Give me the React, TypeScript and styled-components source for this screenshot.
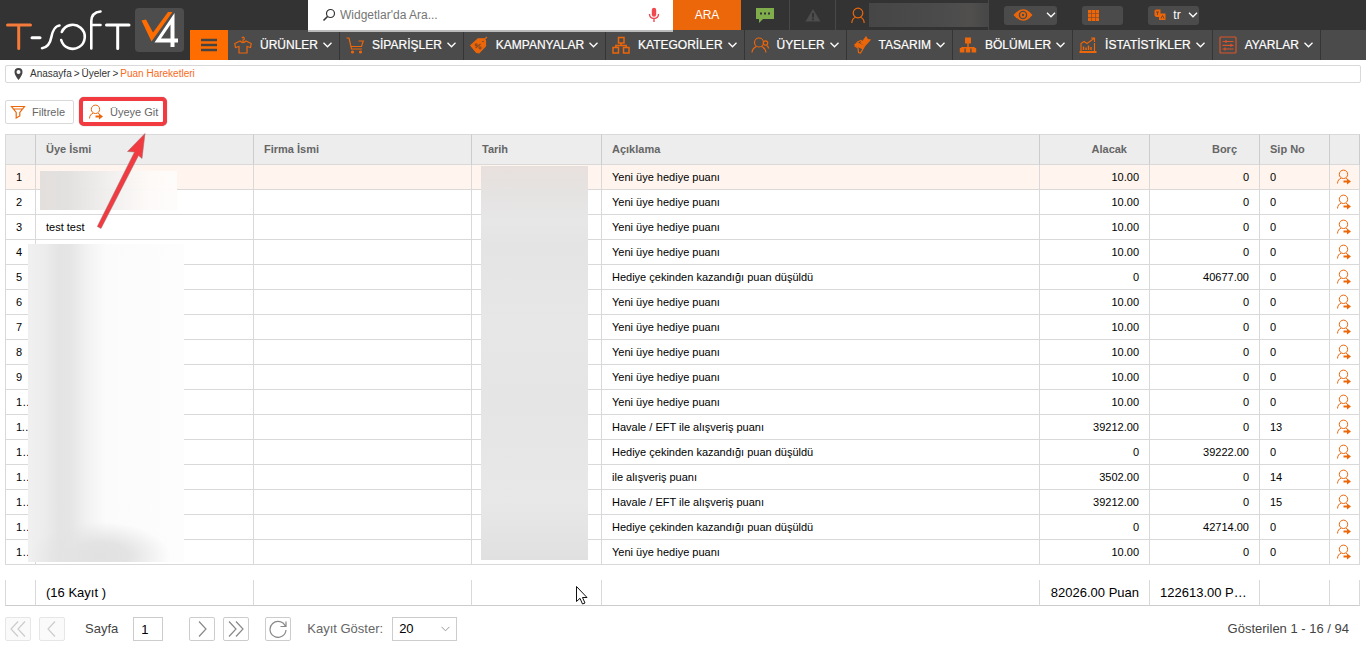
import React from "react";
import styled, { createGlobalStyle, css } from "styled-components";

const ORANGE = "#ec660a";
const LINE = "#d9d9d9";

const GlobalStyle = createGlobalStyle`
  *, *::before, *::after { box-sizing: border-box; }
  body {
    margin: 0;
    background: #fff;
    color: #000;
    font: 11px/14px "Liberation Sans", Arial, sans-serif;
  }
  button, input, select { font: inherit; color: inherit; }
`;

/* ---------- header ---------- */

const Header = styled.header`
  display: flex;
  background: #333;
`;
const LogoLink = styled.a`
  flex: 0 0 190px;
  height: 60px;
`;
const HeaderMain = styled.div`
  flex: 1;
  min-width: 0;
`;
const TopBar = styled.div`
  display: flex;
  align-items: center;
  height: 30px;
  padding-left: 118px;
`;
const Search = styled.form`
  position: relative;
  display: flex;
  flex: 0 0 433px;
  height: 30px;
`;
const SearchField = styled.label`
  display: flex;
  flex: 1;
  align-items: center;
  padding: 0 13px 0 14px;
  background: #fff;
  box-shadow: 0 2px #bbb;
`;
const SearchInput = styled.input`
  flex: 1;
  min-width: 0;
  margin-left: 4px;
  padding: 0;
  border: 0;
  outline: 0;
  background: none;
  font-size: 12px;
  &::placeholder { color: #757575; opacity: 1; }
`;
const SearchButton = styled.button`
  width: 68px;
  padding: 0;
  border: 0;
  background: ${ORANGE};
  color: #fff;
  font-size: 12px;
`;
const TopCell = styled.button<{ $width: number; $end?: boolean }>`
  display: flex;
  align-items: center;
  justify-content: ${(p) => (p.$end ? "flex-end" : "center")};
  width: ${(p) => p.$width}px;
  height: 30px;
  padding: 0;
  border: 0;
  border-right: 1px solid #484848;
  background: none;
`;
const UserName = styled.span`
  width: 119px;
  height: 24px;
  margin-left: 3px;
  background: linear-gradient(90deg, #464646, #4b4b4b 60%, #504f4e 85%, #474747);
`;
const Pill = styled.button<{ $width: number; $gap: number }>`
  display: flex;
  align-items: center;
  justify-content: space-between;
  width: ${(p) => p.$width}px;
  height: 19px;
  margin-left: ${(p) => p.$gap}px;
  padding: 0 1px 0 6px;
  border: 0;
  border-radius: 3px;
  background: #4b4b4b;
  color: #fff;
  font-size: 12px;
`;
const Nav = styled.nav`
  display: flex;
  height: 30px;
  background: #4b4b4b;
`;
const Burger = styled.button`
  display: flex;
  align-items: center;
  justify-content: center;
  width: 38px;
  padding: 0;
  border: 0;
  background: #ff6c00;
`;
const NavLink = styled.a`
  display: flex;
  align-items: center;
  gap: 5px;
  padding: 0 7px 0 6px;
  border-right: 1px solid #353535;
  color: #fff;
  font-size: 12px;
  text-decoration: none;
  white-space: nowrap;
  -webkit-text-stroke: 0.2px #fff;
  svg:first-child { margin-right: 3px; }
`;

/* ---------- page ---------- */

const Page = styled.main`
  padding: 5px 5px 0;
`;
const Breadcrumb = styled.nav`
  display: flex;
  align-items: center;
  gap: 2px;
  height: 18px;
  padding-left: 8px;
  border: 1px solid ${LINE};
  border-radius: 2px;
  font-size: 10px;
  color: #333;
  svg { margin-right: 5px; }
`;
const Crumb = styled.a<{ $current?: boolean }>`
  color: ${(p) => (p.$current ? "#f96a1b" : "#333")};
  text-decoration: none;
`;
const Toolbar = styled.div`
  display: flex;
  align-items: center;
  gap: 5px;
  margin: 14px 0 8px;
`;
const ToolButton = styled.button<{ $marked?: boolean }>`
  display: flex;
  align-items: center;
  gap: 6px;
  height: 24px;
  padding: 0 8px 0 4px;
  border: 1px solid ${LINE};
  border-radius: 2px;
  background: #fff;
  color: #666;
  ${(p) =>
    p.$marked &&
    css`
      height: 29px;
      padding: 0 5px;
      border: 4px solid #f23b40;
      border-radius: 5px;
      box-shadow: 0 0 1px #777;
    `}
`;
const Grid = styled.div`
  position: relative;
  margin-right: 1px;
`;
const Table = styled.table`
  width: 100%;
  table-layout: fixed;
  border-collapse: separate;
  border-spacing: 0;
`;
const cell = css<{ $right?: boolean }>`
  overflow: hidden;
  padding: 0 10px;
  border: solid ${LINE};
  border-width: 0 1px 1px 0;
  text-align: ${(p) => (p.$right ? "right" : "left")};
  text-overflow: ellipsis;
  white-space: nowrap;
  &:first-child { border-left-width: 1px; }
`;
const Th = styled.th<{ $right?: boolean }>`
  ${cell}
  height: 31px;
  padding-right: ${(p) => (p.$right ? 22 : 10)}px;
  padding-bottom: 2px;
  border-top-width: 1px;
  border-right-color: #ccc;
  background: #ededed;
  color: #666;
`;
const Td = styled.td<{ $right?: boolean }>`
  ${cell}
  height: 25px;
`;
const Tr = styled.tr<{ $active?: boolean }>`
  background: ${(p) => (p.$active ? "#fff5ee" : "#fff")};
`;
const IconTd = styled(Td)`
  padding: 0 0 0 6px;
`;
const RowLink = styled.a`
  display: flex;
`;
const Summary = styled(Table)`
  margin-top: 15px;
  font-size: 13px;
`;
const SummaryTd = styled(Td)`
  height: 26px;
  border-bottom-color: #ccc;
`;

const Mask = styled.div<{ $box: [number, number, number, number]; $fill: string }>`
  position: absolute;
  left: ${(p) => p.$box[0]}px;
  top: ${(p) => p.$box[1]}px;
  width: ${(p) => p.$box[2]}px;
  height: ${(p) => p.$box[3]}px;
  background: ${(p) => p.$fill};
`;
const ArrowMark = styled.svg`
  position: absolute;
  left: 85px;
  top: -8px;
  pointer-events: none;
`;
const Pointer = styled.svg`
  position: absolute;
  left: 570px;
  bottom: 0;
  pointer-events: none;
`;

const Pager = styled.footer`
  display: flex;
  align-items: center;
  padding: 11px 12px 0 0;
  color: #444;
  font-size: 13px;
`;
const PagerButton = styled.button`
  display: flex;
  align-items: center;
  justify-content: center;
  width: 26px;
  height: 24px;
  margin-right: 8px;
  padding: 0;
  border: 1px solid #ccc;
  border-radius: 2px;
  background: #fff;
  color: #888;
  &:disabled { border-color: #e6e6e6; background: #fafafa; color: #ccc; }
`;
const PageField = styled.label`
  display: flex;
  align-items: center;
  gap: 15px;
  margin: 0 26px 0 12px;
`;
const PageInput = styled.input`
  width: 30px;
  height: 24px;
  padding: 0 7px;
  border: 1px solid #ccc;
  color: #000;
`;
const Refresh = styled(PagerButton)`
  margin: 0 16px 0 8px;
`;
const SizeField = styled.label`
  position: relative;
  display: flex;
  align-items: center;
  gap: 9px;
  color: #666;
  svg { position: absolute; right: 7px; }
`;
const SizeSelect = styled.select`
  width: 65px;
  height: 24px;
  padding: 0 6px;
  border: 1px solid #ccc;
  border-radius: 0;
  background: #fff;
  color: #000;
  appearance: none;
`;
const Shown = styled.span`
  margin-left: auto;
`;

/* ---------- drawings ---------- */

type IconProps = { w?: number; h?: number; box?: string; stroke?: string; sw?: number; children: React.ReactNode };
const Icon = ({ w = 18, h = 18, box, stroke = ORANGE, sw = 1.2, children }: IconProps) => (
  <svg width={w} height={h} viewBox={box ?? `0 0 ${w} ${h}`} fill="none" stroke={stroke} strokeWidth={sw} aria-hidden="true">
    {children}
  </svg>
);

const Chevron = ({ stroke = "#fff", w = 9, sw = 1.3 }: { stroke?: string; w?: number; sw?: number }) => (
  <Icon w={w} h={6} box="0 0 9 6" stroke={stroke} sw={sw}><path d="M.5.8 4.5 4.8 8.5.8" /></Icon>
);

const Logo = () => (
  <svg width="190" height="60" viewBox="0 0 190 60" fill="none" strokeLinecap="round" strokeWidth="3" role="img" aria-label="T-Soft V4">
    <path d="M7.5 25H30.5M18.7 25V48.5" stroke="#f47b3a" />
    <g stroke="#fff">
      <path d="M32 37.7H40" />
      <path d="M42 48.2C48 47.5 50.5 42 51.5 36.5S55.5 26 59.5 25.5" strokeWidth="2.6" />
      <path d="M61.8 32A12 12 0 1 1 61.2 40" strokeWidth="2.6" />
      <path d="M91.3 48.500V21Q91.5 12.5 100.5 11.5M91.3 25H100.5" strokeWidth="2.6" />
      <path d="M106.5 25H129M117.7 25V48.5" />
    </g>
    <rect x="135" y="8" width="49" height="44" rx="4" fill="#4d4d4d" />
    <path d="M141.5 20.5 146 19.5 153 32.5 168 12H172.5L151.5 41.5Z" fill="#ff6c00" />
    <path d="M174.5 13V38.5H178V42.5H174.5V47H170.5V42.5H154.5ZM170.5 24.5 161 38.5H170.5Z" fill="#fff" fillRule="evenodd" />
  </svg>
);

const MemberGo = () => (
  <Icon w={16} h={16} sw={1}>
    <circle cx="7.5" cy="5.300" r="4.200" />
    <path d="M1.5 14.5C1.7 11.5 3 10 5 9.200M10 9.200 11 10" />
    <path d="M7.500 12.500H11.500" strokeWidth="2" />
    <path d="M11 9.500 15 12.500 11 15.500Z" fill={ORANGE} stroke="none" />
  </Icon>
);

const Bars = () => <Icon w={16} h={14} stroke="#444" sw={2.4}><path d="M0 2H16M0 7H16M0 12H16" /></Icon>;

const ShirtIcon = () => (
  <Icon>
    <path d="M9 5.500V4Q10.8 3.500 10 1.800T7.800 2.200M6 5 .8 7.500 1.500 11.500 5 10.500V17H13V10.500L16.500 11.500 17.200 7.500 12 5Q9 8 6 5Z" />
  </Icon>
);
const CartIcon = () => (
  <Icon>
    <path d="M.5 2H3L5.500 13H16M4 6M12.500 5H17.300L15.500 10.500H5.200" />
    <circle cx="6.500" cy="16" r="1" fill={ORANGE} />
    <circle cx="14.500" cy="16" r="1" fill={ORANGE} />
  </Icon>
);
const TagIcon = () => (
  <Icon>
    <path d="M.8 9.500 8 2.800H14L15.500 4.500V10L9 16.800 6.500 16.500Z" fill={ORANGE} />
    <path d="M12 5.500 17 1" />
    <circle cx="13" cy="5.500" r="1.300" fill="#4b4b4b" />
    <path d="M5.500 12 10.500 8" stroke="#8a4a22" />
    <circle cx="6.200" cy="8.800" r="1" stroke="#8a4a22" />
    <circle cx="10" cy="11.800" r="1" stroke="#8a4a22" />
  </Icon>
);
const TreeIcon = () => (
  <Icon sw={1.5}>
    <path d="M6.500 1.500H12V7H6.500ZM1 11.500H6.500V17H1ZM11.500 11.500H17V17H11.500ZM9 7V9.500M3.800 11.500V9.500H14.200V11.500" />
  </Icon>
);
const UsersIcon = () => (
  <Icon>
    <circle cx="8" cy="6.500" r="4.500" />
    <path d="M1 16.500C1.300 13 3 11.500 5.500 10.500M10.500 10.500C13 11.500 14.500 13 15 16.500" />
    <circle cx="14.500" cy="7" r="2.200" />
    <path d="M15.500 9.500Q17.500 10.500 17.500 12.500" />
  </Icon>
);
const BrushIcon = () => (
  <Icon>
    <path d="M10 5 13 1 14.500 3.500 17 4 12.500 9 11 9.500 8 6.500Z" fill={ORANGE} />
    <path d="M4.500 6 8 4.500 12 9 10.500 12 7.500 17 5.500 16.500 5 12 2 10Z" />
    <path d="M2 8.500 5 7 11 10.500 9.500 12.500 3.500 10Z" fill={ORANGE} />
  </Icon>
);
const OrgIcon = () => (
  <Icon sw={1.5}>
    <path d="M6 1.500H12V7.500H6ZM.8 12H5.400V16.500H.8ZM6.700 12H11.300V16.500H6.700ZM12.600 12H17.200V16.500H12.600Z" fill={ORANGE} stroke="none" />
    <path d="M9 7V13M3 13V11.800H15V13" />
  </Icon>
);
const StatsIcon = () => (
  <Icon>
    <path d="M2 15.500V7.500L5 5.500 8 7.500 15 2.500M12 2H15.500V6M15.500 7V15.500" />
    <path d="M4.500 14V10.500M7 14V11.500M9.500 14V9.500M12 14V11" strokeWidth="1.500" />
    <path d="M.5 15H17.500V17H.5Z" fill={ORANGE} stroke="none" />
  </Icon>
);
const SettingsIcon = () => (
  <Icon stroke="#d9542b">
    <rect x="1" y="1" width="16" height="16" rx="1" />
    <path d="M3.500 5.500H14.500M3.500 9.300H14.500M3.500 13H14.500M7 4V7M12 7.800V10.800M6 11.500V14.500" />
  </Icon>
);

/* ---------- data ---------- */

const NAV: [string, () => React.JSX.Element][] = [
  ["ÜRÜNLER", ShirtIcon],
  ["SİPARİŞLER", CartIcon],
  ["KAMPANYALAR", TagIcon],
  ["KATEGORİLER", TreeIcon],
  ["ÜYELER", UsersIcon],
  ["TASARIM", BrushIcon],
  ["BÖLÜMLER", OrgIcon],
  ["İSTATİSTİKLER", StatsIcon],
  ["AYARLAR", SettingsIcon],
];

type Row = { name?: string; text: string; credit: string; debit: string; order: string };
const gift: Row = { text: "Yeni üye hediye puanı", credit: "10.00", debit: "0", order: "0" };
const spent = (debit: string): Row => ({ text: "Hediye çekinden kazandığı puan düşüldü", credit: "0", debit, order: "0" });
const earned = (text: string, credit: string, order: string): Row => ({ text, credit, debit: "0", order });

const ROWS: Row[] = [
  gift,
  gift,
  { ...gift, name: "test test" },
  gift,
  spent("40677.00"),
  gift,
  gift,
  gift,
  gift,
  gift,
  earned("Havale / EFT ile alışveriş puanı", "39212.00", "13"),
  spent("39222.00"),
  earned("ile alışveriş puanı", "3502.00", "14"),
  earned("Havale / EFT ile alışveriş puanı", "39212.00", "15"),
  spent("42714.00"),
  gift,
];

const WIDTHS = ["31px", "218px", "218px", "130px", "auto", "110px", "110px", "70px", "30px"];
const Columns = () => (
  <colgroup>{WIDTHS.map((width, i) => <col key={i} style={{ width }} />)}</colgroup>
);

export default function App() {
  return (
    <>
      <GlobalStyle />
      <Header>
        <LogoLink href="#"><Logo /></LogoLink>
        <HeaderMain>
          <TopBar>
            <Search onSubmit={(e) => e.preventDefault()}>
              <SearchField>
                <Icon w={14} h={14} stroke="#333">
                  <circle cx="8.500" cy="5.500" r="4" />
                  <path d="M5.500 8.500 1.500 12.500" strokeWidth="1.600" />
                </Icon>
                <SearchInput placeholder="Widgetlar'da Ara..." aria-label="Ara" />
                <Icon w={12} h={16} stroke="#f04a4f" sw={1.4}>
                  <rect x="3.800" y=".8" width="4.400" height="9" rx="2.200" fill="#f04a4f" stroke="none" />
                  <path d="M1.500 7Q1.500 11.500 6 11.500T10.500 7M6 11.500V15" />
                </Icon>
              </SearchField>
              <SearchButton type="submit">ARA</SearchButton>
            </Search>
            <TopCell $width={49} aria-label="Mesajlar">
              <Icon w={18} h={16} stroke="none">
                <path d="M0 1H18V12H7L3 16V12H0Z" fill="#7fad4c" />
                <path d="M4 5.500H6V7.500H4ZM8 5.500H10V7.500H8ZM12 5.500H14V7.500H12Z" fill="#333" />
              </Icon>
            </TopCell>
            <TopCell $width={46} aria-label="Uyarılar">
              <Icon w={16} h={14} stroke="none">
                <path d="M8 1 15.500 13.500H.5Z" fill="#4d4d4d" />
                <path d="M7 5H9V9.500H7ZM7 10.500H9V12.300H7Z" fill="#333" />
              </Icon>
            </TopCell>
            <TopCell $width={153} $end aria-label="Hesap">
              <Icon w={16} h={18}>
                <circle cx="8" cy="7" r="4.800" />
                <path d="M1.800 17C2 13.800 3.500 12 5.500 11.300M10.500 11.300C12.500 12 14 13.800 14.200 17" />
              </Icon>
              <UserName />
            </TopCell>
            <Pill $width={53} $gap={15} aria-label="Önizleme">
              <Icon w={26} h={12} sw={1.4}>
                <path d="M4.500 6Q13 -4 21.500 6 13 16 4.500 6Z" fill={ORANGE} />
                <circle cx="13" cy="6" r="3.600" stroke="#4b4b4b" />
                <circle cx="13" cy="6" r="1.200" fill="#4b4b4b" stroke="none" />
              </Icon>
              <Chevron w={10} />
            </Pill>
            <Pill $width={41} $gap={25} aria-label="Uygulamalar">
              <Icon w={11} h={11} stroke="none">
                <path d="M0 0H11V11H0Z" fill={ORANGE} />
                <path d="M3.500 0V11M7.500 0V11M0 3.500H11M0 7.500H11" stroke="#8a4a22" strokeWidth=".7" />
              </Icon>
            </Pill>
            <Pill $width={51} $gap={25} aria-label="Dil">
              <Icon w={12} h={12} sw={1}>
                <path d="M.5 1.500 2 .5H6.500V8H2L.5 6.500ZM5 4.500H11.500V11H5Z" fill={ORANGE} stroke="none" />
                <path d="M2 3H5M3.500 3V6M7 9.500 8.500 6.500 10 9.500" stroke="#7a4526" />
              </Icon>
              tr
              <Chevron w={10} />
            </Pill>
          </TopBar>
          <Nav>
            <Burger aria-label="Menü"><Bars /></Burger>
            {NAV.map(([label, Glyph]) => (
              <NavLink key={label} href="#"><Glyph />{label}<Chevron /></NavLink>
            ))}
          </Nav>
        </HeaderMain>
      </Header>

      <Page>
        <Breadcrumb>
          <Icon w={9} h={12} stroke="none">
            <path d="M4.500 0A4 4 0 0 1 8.500 4Q8.500 7 4.500 12 .5 7 .5 4A4 4 0 0 1 4.500 0ZM4.500 2A2 2 0 1 0 4.500 6 2 2 0 1 0 4.500 2Z" fill="#444" fillRule="evenodd" />
          </Icon>
          <Crumb href="#">Anasayfa</Crumb>&gt;<Crumb href="#">Üyeler</Crumb>&gt;
          <Crumb href="#" $current>Puan Hareketleri</Crumb>
        </Breadcrumb>

        <Toolbar>
          <ToolButton>
            <Icon w={16} h={16}><path d="M1.500 2.500H14.500L9.800 8.500V12L6.200 14V8.500ZM3.500 5H12.500" /></Icon>
            Filtrele
          </ToolButton>
          <ToolButton $marked><MemberGo />Üyeye Git</ToolButton>
        </Toolbar>

        <Grid>
          <Table>
            <Columns />
            <thead>
              <tr>
                <Th />
                <Th>Üye İsmi</Th>
                <Th>Firma İsmi</Th>
                <Th>Tarih</Th>
                <Th>Açıklama</Th>
                <Th $right>Alacak</Th>
                <Th $right>Borç</Th>
                <Th>Sip No</Th>
                <Th />
              </tr>
            </thead>
            <tbody>
              {ROWS.map((row, i) => (
                <Tr key={i} $active={i === 0}>
                  <Td>{i + 1}</Td>
                  <Td>{row.name}</Td>
                  <Td />
                  <Td />
                  <Td>{row.text}</Td>
                  <Td $right>{row.credit}</Td>
                  <Td $right>{row.debit}</Td>
                  <Td>{row.order}</Td>
                  <IconTd><RowLink href="#" aria-label="Üyeye Git"><MemberGo /></RowLink></IconTd>
                </Tr>
              ))}
            </tbody>
          </Table>
          <Summary>
            <Columns />
            <tbody>
              <tr>
                <SummaryTd />
                <SummaryTd>(16 Kayıt )</SummaryTd>
                <SummaryTd />
                <SummaryTd />
                <SummaryTd />
                <SummaryTd $right>82026.00 Puan</SummaryTd>
                <SummaryTd>122613.00 Puan</SummaryTd>
                <SummaryTd />
                <SummaryTd />
              </tr>
            </tbody>
          </Summary>
          <Mask $box={[35, 37, 137, 39]} $fill="linear-gradient(90deg, #e3dfdd, #e2e1e0 20%, rgba(240,238,237,.95) 48%, rgba(253,250,248,.95) 80%, #fefcfb)" />
          <Mask
            $box={[23, 110, 156, 318]}
            $fill="radial-gradient(ellipse 70px 34px at 72px 312px, #e1e1e1, #e3e3e3 40%, transparent), linear-gradient(90deg, #f0f0f0, #ececec 11%, #e4e4e4 20%, #e5e5e5 27%, #f2f2f2 38%, #fbfbfb 50%, #fdfdfd)"
          />
          <Mask $box={[476, 32, 107, 394]} $fill="linear-gradient(180deg, #e8e0dd, #e5e3e2 7%, #e7e7e7 14%, #e4e4e4 20%, #e7e7e7 40%, #e5e5e5 60%, #e8e8e8 85%, #e0e0e0)" />
          <ArrowMark width="64" height="106" viewBox="0 0 64 106" aria-hidden="true">
            <path d="M7.300 100.500 11 102.500 48.500 29.500 52 32.500 55 7.500 37.500 25.500 44.500 26Z" fill="#f23b40" stroke="#9a6a6a" strokeWidth=".5" />
          </ArrowMark>
          <Pointer width="14" height="21" viewBox="0 0 14 21" aria-hidden="true">
            <path d="M1.500 1.500V16.500L5 13.300 7.500 19 10 18 7.500 12.500H12Z" fill="#fff" stroke="#111" />
          </Pointer>
        </Grid>

        <Pager>
          <PagerButton disabled aria-label="İlk sayfa"><Icon stroke="currentColor"><path d="M9 1.500 2 9 9 16.500M16 1.500 9 9 16 16.500" /></Icon></PagerButton>
          <PagerButton disabled aria-label="Önceki sayfa"><Icon stroke="currentColor"><path d="M12 1.500 5 9 12 16.500" /></Icon></PagerButton>
          <PageField>Sayfa<PageInput defaultValue="1" /></PageField>
          <PagerButton aria-label="Sonraki sayfa"><Icon stroke="currentColor"><path d="M6 1.500 13 9 6 16.500" /></Icon></PagerButton>
          <PagerButton aria-label="Son sayfa"><Icon stroke="currentColor"><path d="M2 1.500 9 9 2 16.500M9 1.500 16 9 9 16.500" /></Icon></PagerButton>
          <Refresh aria-label="Yenile"><Icon stroke="currentColor"><path d="M16.500 6.500A8 8 0 1 0 17 10M17 1.500V6.500H11.500" /></Icon></Refresh>
          <SizeField>
            Kayıt Göster:
            <SizeSelect defaultValue="20"><option>20</option><option>50</option></SizeSelect>
            <Chevron stroke="#999" sw={1} />
          </SizeField>
          <Shown>Gösterilen 1 - 16 / 94</Shown>
        </Pager>
      </Page>
    </>
  );
}
